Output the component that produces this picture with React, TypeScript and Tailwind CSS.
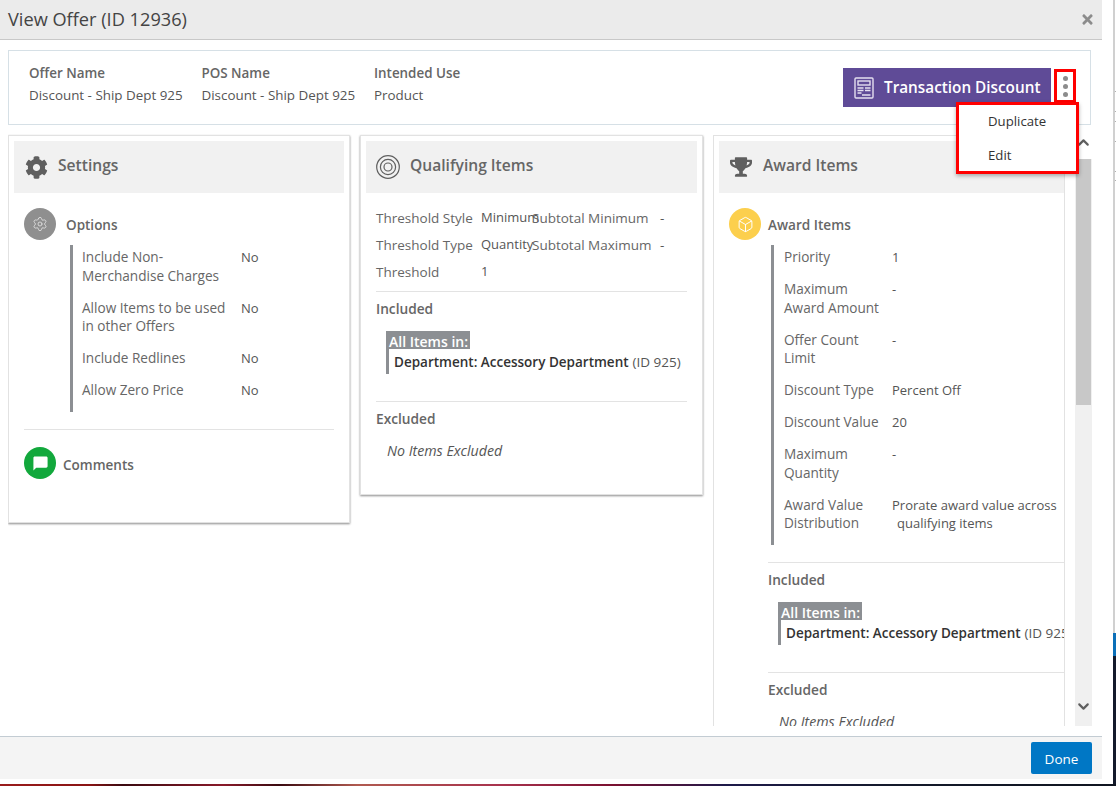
import React from "react";
import { Box, ChevronDown, ChevronUp, Settings } from "lucide-react";
import { FaCog, FaTimes, FaTrophy } from "react-icons/fa";
import { MdChatBubble } from "react-icons/md";

type Row = { label: React.ReactNode; value: React.ReactNode };

const optionRows: Row[] = [
  { label: <>Include Non-<br />Merchandise Charges</>, value: "No" },
  { label: <>Allow Items to be used<br />in other Offers</>, value: "No" },
  { label: "Include Redlines", value: "No" },
  { label: "Allow Zero Price", value: "No" },
];

const awardRows: Row[] = [
  { label: "Priority", value: "1" },
  { label: <>Maximum<br />Award Amount</>, value: "-" },
  { label: <>Offer Count<br />Limit</>, value: "-" },
  { label: "Discount Type", value: "Percent Off" },
  { label: "Discount Value", value: "20" },
  { label: <>Maximum<br />Quantity</>, value: "-" },
  {
    label: <>Award Value<br />Distribution</>,
    value: <>Prorate award value across<br /><span className="pl-[5px]">qualifying items</span></>,
  },
];

function SummaryField({ label, value }: { label: string; value: string }) {
  return (
    <div className="w-[172.5px]">
      <div className="h-[22px] text-[13.4px] leading-[22px] font-semibold text-[#666]">{label}</div>
      <div className="h-[22px] text-[13.4px] leading-[22px] text-[#555]">{value}</div>
    </div>
  );
}

function CardHeader({ icon, title }: { icon: React.ReactNode; title: string }) {
  return (
    <div className="flex h-[52px] items-center bg-[#f1f1f1] pl-[10px]">
      <div className="flex w-[24px] justify-center">{icon}</div>
      <div className="mb-[2px] ml-[10px] text-[15.6px] font-semibold text-[#666]">{title}</div>
    </div>
  );
}

// barra gris con filas etiqueta / valor
function DetailRows({ rows, labelWidth, width, inset }: { rows: Row[]; labelWidth: string; width: string; inset: string }) {
  return (
    <div className={`flex flex-col gap-[13.5px] border-l-[3px] border-[#8c8f93] pb-[12.5px] pt-[3px] leading-[18.5px] ${inset} ${width}`}>
      {rows.map((row, i) => (
        <div key={i} className="flex text-[#666]">
          <div className={`shrink-0 text-[13.6px] ${labelWidth}`}>{row.label}</div>
          <div className="text-[13px] whitespace-nowrap text-[#555]">{row.value}</div>
        </div>
      ))}
    </div>
  );
}

function ItemsBlock() {
  return (
    <>
      <div className="h-px bg-[#e3e3e3]" />
      <div className="mt-[8px] text-[13.7px] leading-[18.5px] font-semibold text-[#666]">Included</div>
      <div className="ml-[10px] mt-[12px]">
        <div className="h-[18px] w-[84px] bg-[#8c8f93] pl-[3px] text-[14px] leading-[21px] font-semibold whitespace-nowrap text-white">All Items in:</div>
        <div className="flex h-[25px] items-center border-l-[3px] border-[#8c8f93] pl-[5px] pt-[2px] text-[13.5px] whitespace-nowrap text-[#333]">
          <span className="font-semibold">Department: Accessory Department</span>
          <span className="ml-[4px] text-[#555]">(ID 925)</span>
        </div>
      </div>
      <div className="mt-[27px] h-px bg-[#e3e3e3]" />
      <div className="mt-[8px] text-[13.7px] leading-[18.5px] font-semibold text-[#666]">Excluded</div>
      <div className="ml-[11px] mt-[14px] text-[14.2px] leading-[18.5px] whitespace-nowrap text-[#555] italic">No Items Excluded</div>
    </>
  );
}

function TargetIcon() {
  return (
    <svg width="24" height="24" viewBox="0 0 24 24" fill="none" stroke="#5f5f5f">
      <circle cx="12" cy="12" r="11.3" strokeWidth="1.2" />
      <circle cx="12" cy="12" r="7.6" strokeWidth="1.2" />
      <circle cx="12" cy="12" r="4" strokeWidth="1.2" />
    </svg>
  );
}

function DiscountIcon() {
  return (
    <svg width="20" height="22" viewBox="0 0 20 22" fill="none" stroke="#e4dff0" strokeWidth="1.4">
      <rect x="1" y="1" width="18" height="20" rx="1" />
      <rect x="4" y="4" width="12" height="4" />
      <path d="M3.5 11h6M11 11h5.5M3.5 13.5h6M11 13.5h5.5M3.5 16h4M8 18h8.5" />
    </svg>
  );
}

export default function App() {
  return (
    <div className="relative flex h-[786px] w-[1116px] flex-col overflow-hidden bg-white font-['Open_Sans','Noto_Sans',sans-serif]">
      <div className="flex h-[784px]">
        <div className="flex w-[1113px] flex-col">
          {/* Header */}
          <div className="flex h-[40px] w-[1102px] shrink-0 items-center justify-between border-b border-[#c8c8c8] bg-[#ebebeb] pl-[8px] pr-[7px]">
            <div className="text-[18.2px] text-[#444]">View Offer (ID 12936)</div>
            <FaTimes className="text-[#8c8c8c]" size={15} />
          </div>

          {/* Cuerpo */}
          <div className="flex h-[696px] shrink-0 flex-col pl-[8px] pt-[10px]">
            <div className="flex h-[75px] w-[1083px] shrink-0 justify-between border border-[#d6e0e6] pl-[20px] pr-[39px]">
              <div className="flex pt-[11px]">
                <SummaryField label="Offer Name" value="Discount - Ship Dept 925" />
                <SummaryField label="POS Name" value="Discount - Ship Dept 925" />
                <SummaryField label="Intended Use" value="Product" />
              </div>
              <div className="mt-[17px] flex h-[39px] w-[208px] items-center bg-[#5f4b97] pl-[11px]">
                <DiscountIcon />
                <span className="ml-[10px] text-[15.3px] font-semibold whitespace-nowrap text-white">Transaction Discount</span>
              </div>
            </div>

            <div className="flex h-[601px] shrink-0">
              <div className="flex w-[1057px] gap-[10px] overflow-hidden pt-[10px]">
                {/* Settings */}
                <div className="h-[388px] w-[342px] shrink-0 border border-[#e2e2e2] p-[5px] shadow-[0_1px_2px_rgba(0,0,0,0.45)]">
                  <CardHeader icon={<FaCog className="text-[#5f5f5f]" size={23} />} title="Settings" />
                  <div className="px-[10px] pt-[15px]">
                    <div className="flex items-center">
                      <div className="flex h-[32px] w-[32px] items-center justify-center rounded-full bg-[#8f8f8f]">
                        <Settings className="text-[#e6e6e6]" size={16} strokeWidth={1.2} />
                      </div>
                      <div className="ml-[10px] mt-[2px] text-[13.5px] font-semibold text-[#666]">Options</div>
                    </div>
                    <div className="ml-[46px] mt-[5px]">
                      <DetailRows rows={optionRows} labelWidth="w-[159px]" width="w-[264px]" inset="pl-[9px]" />
                    </div>
                    <div className="mt-[17px] h-px bg-[#e3e3e3]" />
                    <div className="mt-[17px] flex items-center">
                      <div className="flex h-[32px] w-[32px] items-center justify-center rounded-full bg-[#12a83c]">
                        <MdChatBubble className="text-white" size={17} />
                      </div>
                      <div className="ml-[7px] mt-[4px] text-[13.5px] font-semibold text-[#666]">Comments</div>
                    </div>
                  </div>
                </div>

                {/* Qualifying Items */}
                <div className="h-[360px] w-[343px] shrink-0 border border-[#e2e2e2] p-[5px] shadow-[0_1px_2px_rgba(0,0,0,0.45)]">
                  <CardHeader icon={<TargetIcon />} title="Qualifying Items" />
                  <div className="px-[10px] pt-[11.5px]">
                    <div className="text-[13.5px] text-[#666]">
                      <div className="flex h-[27px] items-center whitespace-nowrap">
                        <div className="w-[105px] shrink-0">Threshold Style</div>
                        <div className="w-[51px] shrink-0 text-[13px] text-[#555]">Minimum</div>
                        <div className="w-[128px] shrink-0">Subtotal Minimum</div>
                        <div className="text-[#555]">-</div>
                      </div>
                      <div className="flex h-[27px] items-center whitespace-nowrap">
                        <div className="w-[105px] shrink-0">Threshold Type</div>
                        <div className="w-[51px] shrink-0 text-[13px] text-[#555]">Quantity</div>
                        <div className="w-[128px] shrink-0">Subtotal Maximum</div>
                        <div className="text-[#555]">-</div>
                      </div>
                      <div className="flex h-[27px] items-center whitespace-nowrap">
                        <div className="w-[105px] shrink-0">Threshold</div>
                        <div className="text-[13px] text-[#555]">1</div>
                      </div>
                    </div>
                    <div className="mt-[5.5px]">
                      <ItemsBlock />
                    </div>
                  </div>
                </div>

                {/* Award Items */}
                <div className="h-[700px] w-[352px] shrink-0 overflow-hidden border border-[#e2e2e2] p-[5px] pr-0">
                  <CardHeader icon={<FaTrophy className="text-[#5f5f5f]" size={22} />} title="Award Items" />
                  <div className="pl-[10px] pt-[15px]">
                    <div className="flex items-center">
                      <div className="flex h-[32px] w-[32px] items-center justify-center rounded-full bg-[#fccf4d]">
                        <Box className="text-white" size={17} strokeWidth={1.4} />
                      </div>
                      <div className="ml-[7px] mt-[2px] text-[13.6px] font-semibold text-[#666]">Award Items</div>
                    </div>
                    <div className="ml-[42px] mt-[5px]">
                      <DetailRows rows={awardRows} labelWidth="w-[108px]" width="w-[290px]" inset="pl-[10px]" />
                    </div>
                    <div className="ml-[39px] mt-[17px]">
                      <ItemsBlock />
                    </div>
                  </div>
                </div>
              </div>

              {/* Scrollbar */}
              <div className="ml-[10px] flex h-[601px] w-[17px] flex-col items-center bg-[#f0f0f0]">
                <div className="flex h-[34px] w-full items-center justify-center bg-white">
                  <ChevronUp className="text-[#5f5f5f]" size={17} strokeWidth={3} />
                </div>
                <div className="h-[246px] w-[15px] bg-[#c8c8c8]" />
                <div className="flex-1" />
                <div className="flex h-[40px] items-center">
                  <ChevronDown className="text-[#5f5f5f]" size={17} strokeWidth={3} />
                </div>
              </div>
            </div>
          </div>

          {/* Footer */}
          <div className="flex h-[43px] w-[1102px] shrink-0 items-center justify-end border-t border-[#c3ccd3] bg-[#f4f4f4] pr-[10px]">
            <button className="h-[32px] w-[61px] rounded-[2px] bg-[#0077c5] pt-[2px] text-[13.5px] text-white">Done</button>
          </div>
        </div>

        {/* Fondo detrás del diálogo */}
        <div className="flex w-[3px] flex-col">
          <div className="flex h-[633px]">
            <div className="w-[1.5px] bg-[#d0d0d0]" />
            <div className="flex flex-1 flex-col bg-white">
              <div className="h-[92px] border-b border-[#b0b0b0]" />
              <div className="h-[20px] border-b border-[#b0b0b0]" />
              <div className="h-[10px] border-b border-[#b0b0b0]" />
              <div className="h-[20px] border-b border-[#b0b0b0]" />
              <div className="h-[30px] border-b border-[#b0b0b0]" />
              <div className="h-[9px] border-b border-[#b0b0b0]" />
            </div>
          </div>
          <div className="h-[23px] bg-[#0b6fb8]" />
          <div className="flex-1 bg-[#141a2b]" />
        </div>
      </div>
      <div className="h-[2px] bg-[linear-gradient(90deg,#9a1c1c_0%,#8a1414_8%,#3a0a10_11%,#8a1a2a_20%,#3a0a10_25%,#b05a50_32%,#a8324d_45%,#7a1030_55%,#1e1a4a_65%,#141a2b_80%,#101520_100%)]" />

      {/* Menú de acciones, con el resaltado rojo encima */}
      <div className="absolute left-[1054px] top-[69px] flex h-[34px] w-[22px] flex-col items-center justify-center gap-[3px] border-[3px] border-[#ff0000]">
        <span className="h-[5px] w-[5px] rounded-full bg-[#8c8c8c]" />
        <span className="h-[5px] w-[5px] rounded-full bg-[#8c8c8c]" />
        <span className="h-[5px] w-[5px] rounded-full bg-[#8c8c8c]" />
      </div>
      <div className="absolute left-[956px] top-[102px] h-[72px] w-[123px] border-[3px] border-[#ff0000] bg-white pl-[29px] text-[13.2px] text-[#333] shadow-[0_2px_4px_rgba(0,0,0,0.3)]">
        <div className="flex h-[33px] items-center">Duplicate</div>
        <div className="flex h-[35px] items-center">Edit</div>
      </div>
    </div>
  );
}
